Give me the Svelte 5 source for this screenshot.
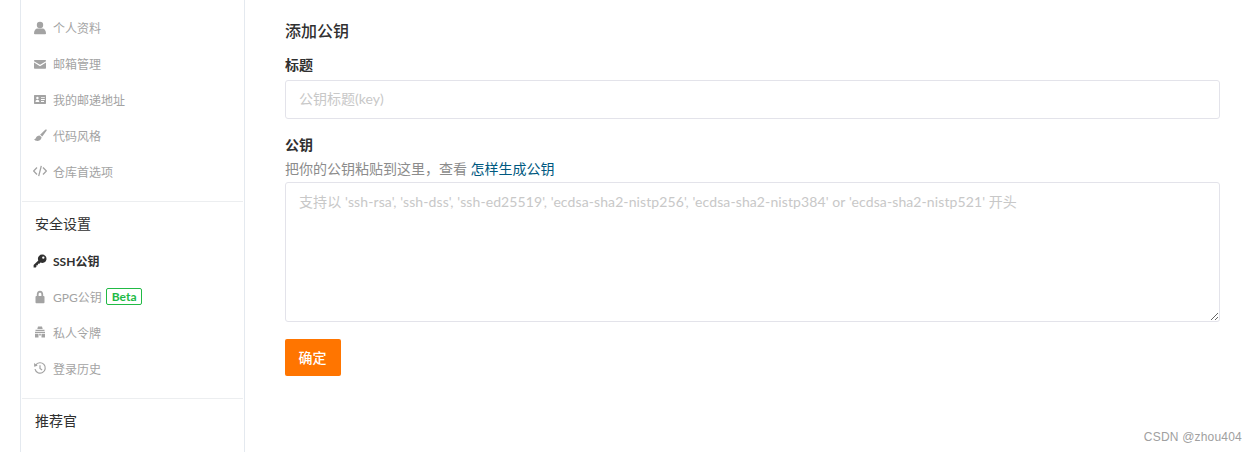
<script lang="ts">
  const accountItems = [
    { icon: 'user', label: '个人资料' },
    { icon: 'mail', label: '邮箱管理' },
    { icon: 'card', label: '我的邮递地址' },
    { icon: 'brush', label: '代码风格' },
    { icon: 'code', label: '仓库首选项' }
  ];
  const securityItems = [
    { icon: 'key', label: 'SSH公钥', active: true },
    { icon: 'lock', label: 'GPG公钥', beta: true },
    { icon: 'token', label: '私人令牌' },
    { icon: 'history', label: '登录历史' }
  ];
  const keyHint =
    "支持以 'ssh-rsa', 'ssh-dss', 'ssh-ed25519', 'ecdsa-sha2-nistp256', 'ecdsa-sha2-nistp384' or 'ecdsa-sha2-nistp521' 开头";
</script>

{#snippet icon(name: string)}
  <svg class="icon" viewBox="0 0 14 14" fill="currentColor" aria-hidden="true">
    {#if name === 'user'}
      <circle cx="7" cy="4" r="3.2" />
      <path d="M1 12.5c0-3 1.6-5 3.4-5h5.2c1.8 0 3.4 2 3.4 5 0 .5-.4.8-.9.8H1.900c-.5 0-.9-.3-.9-.8z" />
    {:else if name === 'mail'}
      <path d="M1 3.800c0-.4.3-.7.7-.7h10.600c.4 0 .7.3.7.700v.4L7 7.800 1 4.200z" />
      <path d="M1 5.600l6 3.600 6-3.600v5.400c0 .4-.3.7-.7.7H1.700c-.4 0-.7-.3-.7-.7z" />
    {:else if name === 'card'}
      <path fill-rule="evenodd" d="M1.600 3h10.800c.4 0 .6.300.6.700v7.600c0 .4-.2.700-.6.700H1.600c-.4 0-.6-.3-.6-.7V3.700c0-.4.2-.7.6-.7zM8 5.200v.9h3.800v-.9zm0 1.900V8h3.800v-.9zm0 1.900v.9h3V9z" />
      <circle cx="4.400" cy="6" r="1.200" fill="#fff" />
      <path d="M2.500 10c0-1.400.8-2.200 1.900-2.200s1.900.8 1.900 2.200z" fill="#fff" />
    {:else if name === 'brush'}
      <g transform="translate(.8 1)">
        <path d="M12.700.6c.4.300.3.800 0 1.200L8.500 7.400 6.300 5.700 11.400.8c.5-.4.900-.5 1.300-.2z" />
        <path d="M5.700 6.500l2.100 1.600c-.1 2.200-1.600 3.800-3.900 3.800-1.900 0-3.300-.9-3.700-1.700 1 .2 1.600-.2 1.900-1.100.4-1.500 1.900-2.600 3.600-2.600z" />
      </g>
    {:else if name === 'code'}
      <path d="M4 3.500L.6 7 4 10.500M10 3.500L13.400 7 10 10.500M8.300 1.800L5.700 12.200" fill="none" stroke="currentColor" stroke-width="1.300" />
    {:else if name === 'key'}
      <path fill-rule="evenodd" d="M9.200.6a4.200 4.200 0 1 1-1.700 8L6.400 9.700H4.900v1.500H3.400v1.500l-.7.7H.6v-2.300L5.300 6.500A4.200 4.200 0 0 1 9.200.6zm1.100 1.800a1.200 1.200 0 1 0 0 2.400 1.200 1.200 0 0 0 0-2.400z" />
    {:else if name === 'lock'}
      <path fill-rule="evenodd" d="M7 .8c2 0 3.200 1.500 3.200 3.600V6h.5c.5 0 .8.400.8.900v5.400c0 .5-.3.900-.8.900H3.300c-.5 0-.8-.4-.8-.9V6.900c0-.5.3-.9.800-.9h.5V4.400C3.800 2.300 5 .8 7 .8zm0 1.900c-.9 0-1.400.7-1.400 1.700V6h2.800V4.400c0-1-.5-1.700-1.400-1.700z" />
    {:else if name === 'token'}
      <path d="M5 1.500h4l.7 2.400H4.300zM2.500 4.700h9v1.200h-9zM2 6.700h10V8H2zM2 8.800h3.500v3.700H2zM8.500 8.800H12v3.700H8.500zM6.200 8.800h1.600v1.800H6.200z" />
    {:else if name === 'history'}
      <path d="M2.700 4.100A5.200 5.200 0 1 1 2 8.200" fill="none" stroke="currentColor" stroke-width="1.200" />
      <path d="M1.100 1.900l3.600 2.900-3.600.9z" />
      <path d="M7 4.200v3.300l2.100 1.400" fill="none" stroke="currentColor" stroke-width="1.200" />
    {/if}
  </svg>
{/snippet}

<div class="page">
  <aside class="sidebar">
    <nav class="group first">
      {#each accountItems as item}
        <a class="item" href="#top">
          {@render icon(item.icon)}
          <span>{item.label}</span>
        </a>
      {/each}
    </nav>

    <section class="group">
      <h3>安全设置</h3>
      {#each securityItems as item}
        <a class="item" class:active={item.active} href="#top">
          {@render icon(item.icon)}
          <span>{item.label}</span>
          {#if item.beta}<em class="beta">Beta</em>{/if}
        </a>
      {/each}
    </section>

    <section class="group last">
      <h3>推荐官</h3>
    </section>
  </aside>

  <main class="content">
    <h2>添加公钥</h2>
    <form onsubmit={(e) => e.preventDefault()}>
      <label for="key-title">标题</label>
      <input id="key-title" type="text" placeholder="公钥标题(key)" />

      <label class="key-label" for="key-body">公钥</label>
      <p class="help">把你的公钥粘贴到这里，查看 <a href="#top">怎样生成公钥</a></p>
      <textarea id="key-body" placeholder={keyHint}></textarea>

      <button type="submit">确定</button>
    </form>
  </main>

  <div class="watermark">CSDN @zhou404</div>
</div>

<style>
  :global(body) {
    margin: 0;
    background: #fff;
  }

  .page {
    position: relative;
    display: flex;
    height: 452px;
    overflow: hidden;
    font-family: Lato, "Noto Sans CJK SC", sans-serif;
    color: #303030;
  }

  .sidebar {
    box-sizing: border-box;
    flex: none;
    width: 225px;
    margin-left: 20px;
    padding: 0 1px;
    border-left: 1px solid #e4e9ef;
    border-right: 1px solid #e4e9ef;
  }

  .group {
    display: flex;
    flex-direction: column;
    padding: 0 0 12px;
    border-bottom: 1px solid #eceef0;
  }

  .group.first {
    padding-top: 10px;
  }

  .group.last {
    border-bottom: 0;
  }

  h3 {
    margin: 0;
    padding: 12px 0 9px 13px;
    font-size: 14px;
    line-height: 20px;
    font-weight: 400;
    color: #303030;
  }

  .item {
    display: flex;
    align-items: center;
    height: 35.800px;
    padding-left: 11px;
    font-size: 12px;
    color: #a3a3a3;
    text-decoration: none;
  }

  .item.active {
    font-weight: 700;
    color: #303030;
  }

  .icon {
    flex: none;
    width: 14px;
    height: 14px;
    margin-right: 6px;
  }

  .beta {
    margin-left: 4px;
    padding: 0 5px;
    border: 1px solid #21ba45;
    border-radius: 2px;
    font-style: normal;
    font-weight: 700;
    font-size: 12px;
    line-height: 15px;
    color: #21ba45;
  }

  .content {
    flex: 1;
    min-width: 0;
    padding: 0 37px 0 40px;
  }

  h2 {
    margin: 20px 0 14px;
    font-size: 16px;
    line-height: 22px;
    font-weight: 500;
    color: #303030;
  }

  form {
    display: flex;
    flex-direction: column;
  }

  label {
    font-size: 14px;
    line-height: 18px;
    font-weight: 700;
    color: #303030;
    margin-bottom: 6px;
  }

  .key-label {
    margin: 17px 0 0;
  }

  .help {
    margin: 6px 0 4px;
    font-size: 14px;
    line-height: 18px;
    color: #8c8c8c;
  }

  .help a {
    color: #005980;
    text-decoration: none;
  }

  input,
  textarea {
    box-sizing: border-box;
    width: 100%;
    margin: 0;
    padding: 0 13px;
    border: 1px solid #e3e3ea;
    border-radius: 3px;
    outline: none;
    font-family: inherit;
    font-size: 14px;
    color: #303030;
    background: #fff;
  }

  input {
    height: 39px;
    padding-bottom: 2px;
  }

  textarea {
    display: block;
    height: 140px;
    padding-top: 9px;
    line-height: 20px;
    letter-spacing: 0.1px;
    resize: vertical;
  }

  input::placeholder,
  textarea::placeholder {
    color: #c8c8c8;
    opacity: 1;
  }

  button {
    align-self: flex-start;
    width: 56px;
    height: 37px;
    margin-top: 17px;
    padding: 0 1px 2px 0;
    border: 0;
    border-radius: 2px;
    background: #ff7500;
    color: #fff;
    font-family: inherit;
    font-size: 14px;
    font-weight: 500;
  }

  .watermark {
    position: absolute;
    right: 15px;
    bottom: 7px;
    font-family: "Liberation Sans", sans-serif;
    font-size: 12px;
    letter-spacing: 0.2px;
    line-height: 16px;
    color: #a0a0a0;
  }
</style>
